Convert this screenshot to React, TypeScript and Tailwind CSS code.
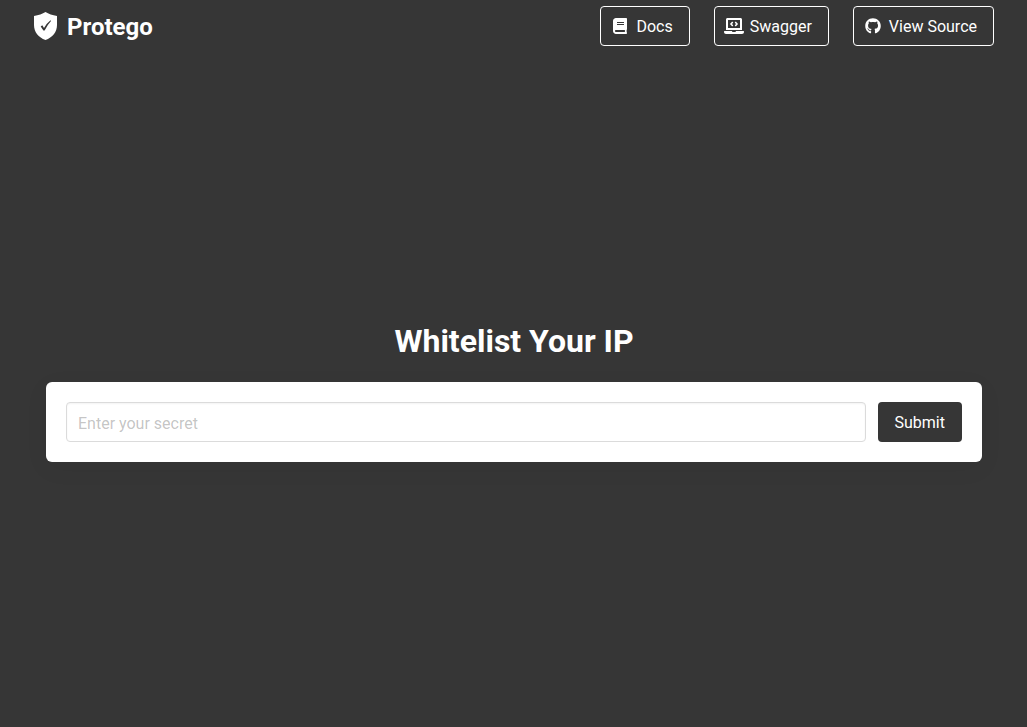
import React from 'react';
import { FaBook, FaGithub, FaLaptopCode } from 'react-icons/fa';

const links = [
  { label: 'Docs', href: '#docs', Icon: FaBook, iconSize: 'h-4 w-[14px]' },
  { label: 'Swagger', href: '#swagger', Icon: FaLaptopCode, iconSize: 'h-4 w-5' },
  { label: 'View Source', href: '#source', Icon: FaGithub, iconSize: 'h-4 w-4' },
];

function Logo() {
  return (
    <svg viewBox="0 0 24 28" className="h-7 w-6" aria-hidden="true">
      <path d="M12.500 0 C15.500 2 19.500 3.200 24 4 V13 C24 20 19.500 25.500 12.500 28 C5.500 25.500 1 20 1 13 V4 C5.500 3.200 9.500 2 12.500 0 Z" fill="#fff" />
      <path d="M7.700 14.500 L9.300 13.300 L11 16 Q13.500 11.500 17.500 8.300 L18 8.900 Q14.200 13 11.600 18.500 H10.400 Z" fill="#363636" />
    </svg>
  );
}

export default function App() {
  return (
    <div className="flex min-h-screen flex-col bg-[#363636] font-[Roboto,sans-serif] text-base text-white">
      <header className="flex h-13 items-center justify-between px-[33px]">
        <a href="#home" className="flex items-center gap-[10px] text-2xl font-bold">
          <Logo />
          <span className="pt-0.5">Protego</span>
        </a>
        <nav className="flex gap-6">
          {links.map(({ label, href, Icon, iconSize }) => (
            <a key={label} href={href} className="flex h-10 items-center gap-1 rounded border border-white pr-4 pl-[7px]">
              <span className="flex w-6 justify-center">
                <Icon aria-hidden="true" className={iconSize} />
              </span>
              <span className="pt-0.5">{label}</span>
            </a>
          ))}
        </nav>
      </header>
      <main className="flex grow flex-col justify-center pt-[5px] pr-[45px] pl-[46px]">
        <h1 className="mb-[23px] text-center text-[32px] leading-9 font-bold">Whitelist Your IP</h1>
        <form className="flex gap-3 rounded-md bg-white p-5 shadow-[0_6px_24px_0_rgba(10,10,10,0.05)]">
          <input
            type="password"
            aria-label="Secret"
            placeholder="Enter your secret"
            className="h-10 min-w-0 grow rounded border border-[#dbdbdb] px-[11px] pt-1 text-[#363636] shadow-[inset_0_1px_2px_rgba(10,10,10,0.05)] placeholder:text-[#363636]/30"
          />
          <button type="submit" className="h-10 rounded border border-transparent bg-[#363636] px-4 pt-0.5">
            Submit
          </button>
        </form>
      </main>
    </div>
  );
}
